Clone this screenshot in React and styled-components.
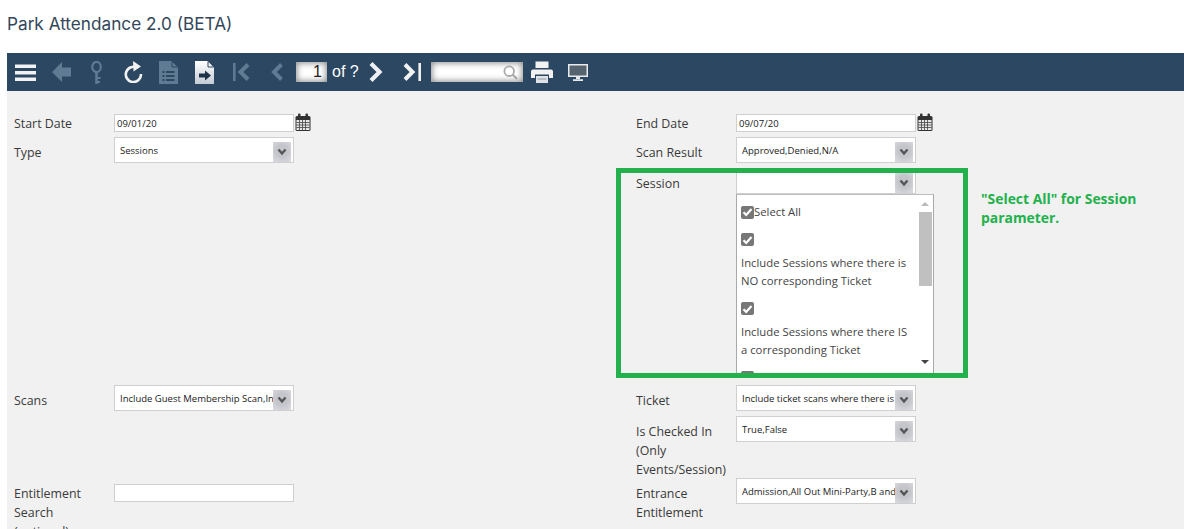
import styled, { createGlobalStyle } from 'styled-components';

const GlobalStyle = createGlobalStyle`
  html, body {
    margin: 0;
    padding: 0;
    height: 529px;
    overflow: hidden;
    background: #fff;
    font-family: "Open Sans", "Noto Sans", sans-serif;
  }
`;

const Page = styled.div`
  position: relative;
  width: 1184px;
  height: 529px;
  overflow: hidden;
  padding-left: 7px;
  box-sizing: border-box;
`;

const Title = styled.h1`
  margin: 0;
  height: 53px;
  padding-top: 14px;
  box-sizing: border-box;
  font-family: Inter, sans-serif;
  font-size: 17.2px;
  font-weight: 400;
  line-height: 20px;
  color: #33475a;
`;

const Toolbar = styled.div`
  display: flex;
  align-items: center;
  height: 38px;
  background: #2c4762;
`;

const ToolSvg = styled.svg`
  flex: none;
  display: block;
  margin-left: ${(p) => p.$ml}px;
`;

const GlowInput = styled.div`
  flex: none;
  box-sizing: border-box;
  height: 20px;
  margin-left: ${(p) => p.$ml}px;
  width: ${(p) => p.$w}px;
  background: #fff;
  box-shadow: inset 0 0 6px 1px #8a8a8a;
  display: flex;
  align-items: center;
  justify-content: flex-end;
  padding-right: 5px;
  font-family: "Liberation Sans", sans-serif;
  font-size: 16px;
  color: #222;
`;

const PageOf = styled.span`
  flex: none;
  width: 26px;
  margin-left: 5px;
  font-family: "Liberation Sans", sans-serif;
  font-size: 16px;
  color: #fff;
  white-space: nowrap;
`;

const Form = styled.div`
  height: 438px;
  background: #f1f1f1;
  padding-top: 23px;
  box-sizing: border-box;
  overflow: hidden;
`;

const Row = styled.div`
  display: grid;
  grid-template-columns: 100px 522px 100px 1fr;
  height: ${(p) => p.$h}px;
  padding-left: 7px;
`;

const Label = styled.div`
  padding-top: ${(p) => (p.$flush ? 0 : 6)}px;
  font-size: 12.4px;
  line-height: 19px;
  color: #3a3a3a;
  width: 92px;
`;

const Cell = styled.div`
  display: flex;
  align-items: flex-start;
`;

const StackCell = styled.div`
  display: flex;
  flex-direction: column;
  align-items: flex-start;
`;

const DateBox = styled.div`
  box-sizing: border-box;
  width: 180px;
  height: 18px;
  margin-top: ${(p) => p.$mt || 0}px;
  background: #fff;
  border: 1px solid #cfcfcf;
  padding-left: 2px;
  font-size: 9.5px;
  line-height: 17px;
  color: #222;
`;

const SelectBox = styled.div`
  box-sizing: border-box;
  flex: none;
  width: 180px;
  height: 26px;
  background: #fff;
  border: 1px solid #cfcfcf;
  display: flex;
  align-items: center;
  padding: 0 2px 0 5px;
`;

const SelectText = styled.span`
  flex: 1;
  min-width: 0;
  overflow: hidden;
  white-space: nowrap;
  font-size: 9.5px;
  line-height: 26px;
  height: 24px;
  color: #222;
`;

const ArrowButton = styled.span`
  flex: none;
  width: 18px;
  height: 20px;
  margin-top: 3px;
  background: radial-gradient(circle at 50% 45%, #c4c4cb 40%, #dcdce2 100%);
  display: flex;
  align-items: center;
  justify-content: center;
`;

const DropList = styled.div`
  box-sizing: border-box;
  display: flex;
  width: 198px;
  height: 184px;
  background: #fff;
  border: 1px solid #a9a9a9;
  border-top-color: #bdbdbd;
  overflow: hidden;
`;

const DropItems = styled.div`
  flex: 1;
  min-width: 0;
  padding: 10px 8px 0 4px;
  font-size: 11.3px;
  line-height: 18px;
  color: #444;
`;

const DropItem = styled.div`
  padding-bottom: 12px;
`;

const SelectAllItem = styled.div`
  display: flex;
  align-items: center;
  height: 14px;
  margin-bottom: 14px;
`;

const Check = styled.span`
  flex: none;
  display: flex;
  align-items: center;
  justify-content: center;
  width: 13px;
  height: 13px;
  margin-bottom: ${(p) => p.$mb || 0}px;
  border-radius: 2px;
  background: #777;
`;

const ScrollTrack = styled.div`
  flex: none;
  width: 16px;
  display: flex;
  flex-direction: column;
  align-items: center;
  padding-top: 7px;
  box-sizing: border-box;
`;

const ScrollUp = styled.span`
  width: 0;
  height: 0;
  border: 4px solid transparent;
  border-top: 0;
  border-bottom: 4px solid #b9b9b9;
`;

const ScrollThumb = styled.span`
  width: 13px;
  height: 74px;
  margin-top: 6px;
  background: #c0c0c0;
`;

const ScrollDown = styled.span`
  width: 0;
  height: 0;
  margin-top: 74px;
  border: 4px solid transparent;
  border-bottom: 0;
  border-top: 4px solid #444;
`;

const CalendarSvg = styled.svg`
  display: block;
  flex: none;
  margin: -1px 0 0 1px;
`;

const Callout = styled.div`
  position: absolute;
  left: 616px;
  top: 168px;
  width: 352px;
  height: 210px;
  box-sizing: border-box;
  border: 5px solid #22b14c;
  pointer-events: none;
`;

const CalloutNote = styled.div`
  position: absolute;
  left: 981px;
  top: 190px;
  width: 190px;
  font-size: 13.9px;
  font-weight: 700;
  line-height: 18.5px;
  color: #22b14c;
`;

const Chevron = () => (
  <svg width="10" height="8" viewBox="0 0 10 8">
    <path d="M1.5 1.5 L5 5.5 L8.5 1.5" fill="none" stroke="#555" strokeWidth="2.4" />
  </svg>
);

const Calendar = () => (
  <CalendarSvg width="16" height="19" viewBox="0 0 16 19">
    <rect x="0.5" y="3" width="15" height="15" rx="1.5" fill="#333" />
    <rect x="1.5" y="7" width="13" height="10" fill="#e6e6e6" />
    <path d="M4.5 7V17M7.5 7V17M10.5 7V17M1.5 9.5H14.5M1.5 12H14.5M1.5 14.5H14.5" stroke="#444" strokeWidth="0.8" />
    <rect x="3" y="0.5" width="2.5" height="5" rx="1" fill="#333" />
    <rect x="10.5" y="0.5" width="2.5" height="5" rx="1" fill="#333" />
  </CalendarSvg>
);

const Tick = () => (
  <svg width="11" height="10" viewBox="0 0 11 10">
    <path d="M1.5 5.2 L4.2 8 L9.5 2" fill="none" stroke="#fff" strokeWidth="2.2" />
  </svg>
);

const Select = ({ value }) => (
  <SelectBox>
    <SelectText>{value}</SelectText>
    <ArrowButton>
      <Chevron />
    </ArrowButton>
  </SelectBox>
);

const DISABLED = '#5f7a93';

const ToolIcons = {
  Menu: () => (
    <ToolSvg $ml={8} width="21" height="17" viewBox="0 0 21 17">
      <path d="M0 0.5H21V4H0zM0 7H21V10.5H0zM0 13.5H21V17H0z" fill="#f2f2f2" />
    </ToolSvg>
  ),
  Back: () => (
    <ToolSvg $ml={16} width="19" height="20" viewBox="0 0 19 20">
      <path d="M10 0 L0 10 L10 20 V14.5 H19 V5.5 H10z" fill={DISABLED} />
    </ToolSvg>
  ),
  Key: () => (
    <ToolSvg $ml={20} width="11" height="23" viewBox="0 0 11 23">
      <ellipse cx="5.5" cy="6" rx="4.3" ry="5" fill="none" stroke={DISABLED} strokeWidth="2.2" />
      <path d="M4.2 10.5H6.8V23H4.2zM6.8 16H9.5V18H6.8zM6.8 20H9V22H6.8z" fill={DISABLED} />
    </ToolSvg>
  ),
  Refresh: () => (
    <ToolSvg $ml={22} width="19" height="22" viewBox="0 0 19 22">
      <path d="M13.5 7 A7.6 7.6 0 1 0 17 13" fill="none" stroke="#f2f2f2" strokeWidth="2.6" />
      <path d="M9 0 L17 5.5 L9.5 10.5z" fill="#f2f2f2" />
    </ToolSvg>
  ),
  Doc: () => (
    <ToolSvg $ml={16} width="19" height="23" viewBox="0 0 19 23">
      <path d="M0 0H12.5L19 6.5V23H0z" fill={DISABLED} />
      <path d="M13 0.5V6H18.5" fill="none" stroke="#2c4762" strokeWidth="1" />
      <path d="M3.5 10H5.5V12H3.5zM3.5 14H5.5V16H3.5zM3.5 18H5.5V20H3.5zM7 10H15.5V12H7zM7 14H15.5V16H7zM7 18H15.5V20H7z" fill="#2c4762" />
    </ToolSvg>
  ),
  Export: () => (
    <ToolSvg $ml={17} width="19" height="23" viewBox="0 0 19 23">
      <defs>
        <linearGradient id="exportFill" x1="0" y1="0" x2="0" y2="1">
          <stop offset="0" stopColor="#ffffff" />
          <stop offset="1" stopColor="#c4ccd4" />
        </linearGradient>
      </defs>
      <path d="M0 0H12.5L19 6.5V23H0z" fill="url(#exportFill)" />
      <path d="M13 0.5V6H18.5" fill="none" stroke="#2c4762" strokeWidth="1" />
      <path d="M4 12.5H10V9.5L16 14.5L10 19.5V16.5H4z" fill="#1e3346" />
    </ToolSvg>
  ),
  First: () => (
    <ToolSvg $ml={19} width="17" height="18" viewBox="0 0 17 18">
      <path d="M0 0H2.6V18H0z" fill={DISABLED} />
      <path d="M15 1.5 L7.5 9 L15 16.5" fill="none" stroke={DISABLED} strokeWidth="4" />
    </ToolSvg>
  ),
  Prev: () => (
    <ToolSvg $ml={21} width="12" height="18" viewBox="0 0 12 18">
      <path d="M10.5 1.5 L3 9 L10.5 16.5" fill="none" stroke={DISABLED} strokeWidth="4" />
    </ToolSvg>
  ),
  Next: () => (
    <ToolSvg $ml={11} width="14" height="20" viewBox="0 0 14 20">
      <path d="M2 1.5 L10.5 10 L2 18.5" fill="none" stroke="#eef1f4" strokeWidth="4.2" />
    </ToolSvg>
  ),
  Last: () => (
    <ToolSvg $ml={20} width="18" height="18" viewBox="0 0 18 18">
      <path d="M2 1.5 L9.5 9 L2 16.5" fill="none" stroke="#f2f2f2" strokeWidth="4" />
      <path d="M15.4 0H18V18H15.4z" fill="#f2f2f2" />
    </ToolSvg>
  ),
  Print: () => (
    <ToolSvg $ml={8} width="22" height="22" viewBox="0 0 22 22">
      <path d="M4.5 0.5H17.5V7H4.5z" fill="#f2f2f2" />
      <path d="M2 8.5H20a2 2 0 0 1 2 2V17H18V13.5H4V17H0V10.5a2 2 0 0 1 2-2z" fill="#f2f2f2" />
      <path d="M5 15H17V22H5z" fill="#dfe3e7" />
      <path d="M6.5 18H15.5" stroke="#8a98a6" strokeWidth="1" />
    </ToolSvg>
  ),
  Monitor: () => (
    <ToolSvg $ml={15} width="20" height="17" viewBox="0 0 20 17">
      <rect x="0" y="0" width="20" height="13" fill="#e8eaec" />
      <rect x="1.5" y="1.5" width="17" height="10" fill="#566470" />
      <path d="M8 13H12V15H8zM5 15.2H15V17H5z" fill="#e8eaec" />
    </ToolSvg>
  ),
};

const SearchGlass = () => (
  <svg width="15" height="15" viewBox="0 0 15 15">
    <circle cx="6.2" cy="6.2" r="4.8" fill="none" stroke="#a9a9a9" strokeWidth="1.8" />
    <path d="M9.8 9.8 L14 14" stroke="#a9a9a9" strokeWidth="2.2" />
  </svg>
);

const App = () => {
  const { Menu, Back, Key, Refresh, Doc, Export, First, Prev, Next, Last, Print, Monitor } = ToolIcons;
  return (
    <>
      <GlobalStyle />
      <Page>
        <Title>Park Attendance 2.0 (BETA)</Title>
        <Toolbar>
          <Menu />
          <Back />
          <Key />
          <Refresh />
          <Doc />
          <Export />
          <First />
          <Prev />
          <GlowInput $ml={13} $w={31}>1</GlowInput>
          <PageOf>of ?</PageOf>
          <Next />
          <Last />
          <GlowInput $ml={10} $w={92}>
            <SearchGlass />
          </GlowInput>
          <Print />
          <Monitor />
        </Toolbar>
        <Form>
          <Row $h={23}>
            <Label $flush>Start Date</Label>
            <Cell>
              <DateBox>09/01/20</DateBox>
              <Calendar />
            </Cell>
            <Label $flush>End Date</Label>
            <Cell>
              <DateBox>09/07/20</DateBox>
              <Calendar />
            </Cell>
          </Row>
          <Row $h={31}>
            <Label>Type</Label>
            <Cell>
              <Select value="Sessions" />
            </Cell>
            <Label>Scan Result</Label>
            <Cell>
              <Select value="Approved,Denied,N/A" />
            </Cell>
          </Row>
          <Row $h={217}>
            <div />
            <div />
            <Label>Session</Label>
            <StackCell>
              <Select value="" />
              <DropList>
                <DropItems>
                  <SelectAllItem>
                    <Check>
                      <Tick />
                    </Check>
                    Select All
                  </SelectAllItem>
                  <DropItem>
                    <Check $mb={8}>
                      <Tick />
                    </Check>
                    Include Sessions where there is NO corresponding Ticket
                  </DropItem>
                  <DropItem>
                    <Check $mb={8}>
                      <Tick />
                    </Check>
                    Include Sessions where there IS a corresponding Ticket
                  </DropItem>
                  <DropItem>
                    <Check />
                  </DropItem>
                </DropItems>
                <ScrollTrack>
                  <ScrollUp />
                  <ScrollThumb />
                  <ScrollDown />
                </ScrollTrack>
              </DropList>
            </StackCell>
          </Row>
          <Row $h={31}>
            <Label>Scans</Label>
            <Cell>
              <Select value="Include Guest Membership Scan,Include Other" />
            </Cell>
            <Label>Ticket</Label>
            <Cell>
              <Select value="Include ticket scans where there is a ticket" />
            </Cell>
          </Row>
          <Row $h={62}>
            <div />
            <div />
            <Label>Is Checked In (Only Events/Session)</Label>
            <Cell>
              <Select value="True,False" />
            </Cell>
          </Row>
          <Row $h={80}>
            <Label>Entitlement Search (optional)</Label>
            <Cell>
              <DateBox $mt={6} />
            </Cell>
            <Label>Entrance Entitlement</Label>
            <Cell>
              <Select value="Admission,All Out Mini-Party,B and C" />
            </Cell>
          </Row>
        </Form>
        <Callout />
        <CalloutNote>"Select All" for Session parameter.</CalloutNote>
      </Page>
    </>
  );
};

export default App;
